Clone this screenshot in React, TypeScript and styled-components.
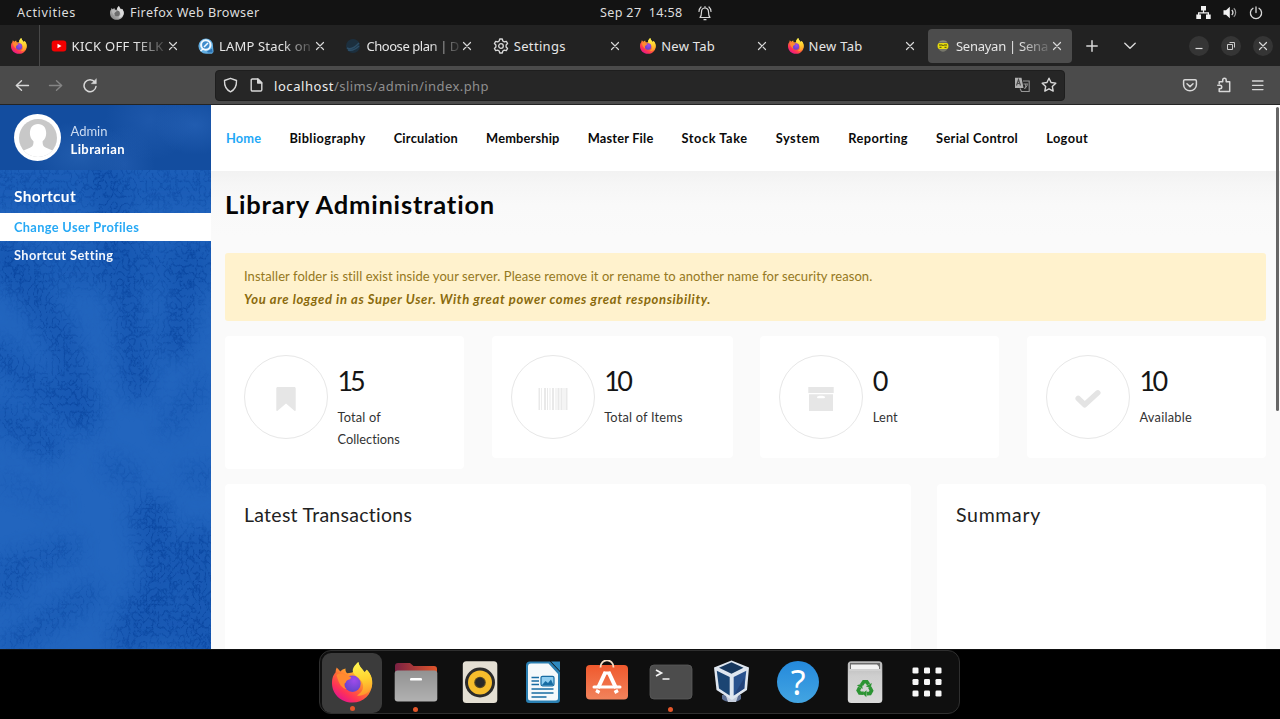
import React, { useLayoutEffect, useRef, useState } from "react";
import styled, { createGlobalStyle, css } from "styled-components";

const systemFont = '"Noto Sans", "Open Sans", sans-serif';
const pageFont = 'Lato, "Open Sans", sans-serif';

const GlobalStyle = createGlobalStyle`
  * { box-sizing: border-box; }
  html, body { margin: 0; padding: 0; background: #000; overflow: hidden; }
  svg { display: block; flex: none; }
`;

/* ---------- text tracked to a given width ---------- */

const TrackedText = styled.span`
  display: inline-block;
  white-space: pre;
`;

function Tracked({ width, children }: { width: number; children: string }) {
  const ref = useRef<HTMLSpanElement>(null);
  const [spacing, setSpacing] = useState(0);
  useLayoutEffect(() => {
    if (ref.current) {
      const natural = ref.current.getBoundingClientRect().width;
      setSpacing((width - natural) / children.length);
    }
  }, [width, children]);
  return (
    <TrackedText ref={ref} style={{ letterSpacing: spacing }}>
      {children}
    </TrackedText>
  );
}

/* ---------- desktop ---------- */

const Desktop = styled.div`
  width: 1280px;
  height: 719px;
  display: flex;
  flex-direction: column;
  background: #000;
  font-family: ${systemFont};
  overflow: hidden;
`;

const TopBar = styled.header`
  height: 25px;
  flex: none;
  background: #131313;
  color: #dedede;
  display: grid;
  grid-template-columns: 600px 1fr auto;
  align-items: center;
  padding-right: 17px;
  font-size: 12.6px;
  line-height: 25px;
`;

const TopLeft = styled.div`
  display: flex;
  align-items: center;
  padding-left: 17px;
`;

const AppMenu = styled.div`
  display: flex;
  align-items: center;
  gap: 6px;
  margin-left: 34px;
`;

const Clock = styled.div`
  display: flex;
  align-items: center;
  gap: 15px;
`;

const Tray = styled.div`
  display: flex;
  align-items: center;
  gap: 11.5px;
`;

/* ---------- browser chrome ---------- */

const TabStrip = styled.div`
  height: 41px;
  flex: none;
  background: #222;
  display: flex;
  align-items: center;
`;

const PinnedTab = styled.div`
  width: 40px;
  height: 41px;
  border-right: 1px solid #484848;
  display: flex;
  align-items: center;
  padding-left: 11px;
  margin-right: 3.6px;
`;

const Tab = styled.div<{ $active?: boolean }>`
  width: 144px;
  height: 34px;
  margin-right: 3.4px;
  flex: none;
  border-radius: 4px;
  background: ${(p) => (p.$active ? "#4c4c4c" : "transparent")};
  display: flex;
  align-items: center;
  padding: 0 10px 0 7px;
`;

const TabTitle = styled.div<{ $fade?: boolean }>`
  width: 93px;
  margin-left: 5px;
  margin-right: 3px;
  overflow: hidden;
  white-space: nowrap;
  color: #e6e6e6;
  font-size: 13px;
  line-height: 20px;
  ${(p) =>
    p.$fade &&
    css`
      mask-image: linear-gradient(90deg, #000 68%, rgba(0, 0, 0, 0.15) 100%);
    `}
`;

const StripTools = styled.div`
  display: flex;
  align-items: center;
  gap: 26px;
  margin-left: 10.5px;
`;

const WindowButtons = styled.div`
  display: flex;
  gap: 12px;
  margin-left: auto;
  margin-right: 7px;
`;

const WindowButton = styled.div`
  width: 20px;
  height: 20px;
  border-radius: 50%;
  background: #353535;
  display: flex;
  align-items: center;
  justify-content: center;
`;

const Toolbar = styled.div`
  height: 39px;
  flex: none;
  background: #4b4b4b;
  border-bottom: 1px solid #242424;
  display: flex;
  align-items: center;
`;

const NavButtons = styled.div`
  width: 215px;
  display: flex;
  gap: 18px;
  padding-left: 14px;
`;

const UrlBar = styled.div`
  width: 850px;
  height: 31px;
  border-radius: 4px;
  background: #262626;
  border: 1px solid #1e1e1e;
  display: flex;
  align-items: center;
  padding: 0 7px 0 7px;
  color: #8f8f8f;
  font-size: 13px;
  line-height: 20px;
  b { font-weight: 400; color: #ececec; }
`;

const UrlText = styled.div`
  margin-left: 11px;
  padding-top: 1px;
  flex: 1;
  display: flex;
`;

const ToolbarRight = styled.div`
  display: flex;
  gap: 18px;
  margin-left: auto;
  margin-right: 14px;
`;

/* ---------- page ---------- */

const Page = styled.main`
  height: 544px;
  flex: none;
  display: flex;
  background: #fafafa;
  font-family: ${pageFont};
  position: relative;
  overflow: hidden;
`;

const Sidebar = styled.aside`
  width: 211px;
  flex: none;
  position: relative;
  background: #1e60ba;
  color: #fff;
`;

const Texture = styled.svg`
  position: absolute;
  inset: 0;
`;

const SidebarContent = styled.div`
  position: relative;
`;

const Profile = styled.div`
  height: 65px;
  display: flex;
  align-items: center;
  padding-left: 14px;
  background:
    radial-gradient(ellipse 40px 30px at 195px 20px, rgba(45, 105, 190, 0.55), transparent),
    radial-gradient(ellipse 45px 40px at 150px 15px, rgba(40, 98, 182, 0.5), transparent),
    radial-gradient(ellipse 50px 34px at 80px 50px, rgba(45, 105, 185, 0.55), transparent),
    radial-gradient(ellipse 30px 40px at 125px 60px, rgba(40, 98, 182, 0.5), transparent),
    #134d9f;
`;

const Avatar = styled.div`
  width: 47px;
  height: 47px;
  border-radius: 50%;
  background: #fff;
  display: flex;
  align-items: center;
  justify-content: center;
  margin-right: 9.5px;
`;

const ProfileText = styled.div`
  display: flex;
  flex-direction: column;
  align-items: flex-start;
  font-size: 13px;
  line-height: 18px;
  padding-top: 4px;
  color: #ccdcf1;
  b { color: #fff; }
`;

const ShortcutTitle = styled.h2`
  margin: 0;
  height: 43px;
  padding: 11px 14px 0;
  font-size: 15.5px;
  line-height: 30px;
  font-weight: 700;
`;

const ShortcutLink = styled.div<{ $active?: boolean }>`
  height: 28px;
  padding-left: 14px;
  line-height: 28px;
  font-size: 12.8px;
  font-weight: 700;
  color: ${(p) => (p.$active ? "#27a9f5" : "#f2f6fc")};
  background: ${(p) => (p.$active ? "#fff" : "transparent")};
`;

const Content = styled.section`
  flex: 1;
  display: flex;
  flex-direction: column;
`;

const MenuBar = styled.nav`
  height: 66px;
  flex: none;
  background: #fff;
  display: flex;
  gap: 28.1px;
  padding-left: 15px;
  font-size: 12.8px;
  line-height: 66px;
  font-weight: 700;
`;

const MenuItem = styled.div<{ $active?: boolean }>`
  color: ${(p) => (p.$active ? "#1fa8f6" : "#0a0a0a")};
  white-space: nowrap;
`;

const TitleBand = styled.div`
  height: 68px;
  flex: none;
  padding-left: 14px;
  background: linear-gradient(#f2f2f2 0, #f6f6f6 14px, #f9f9f9 34px, #fafafa 66px);
  h1 {
    margin: 0;
    font-size: 25.5px;
    line-height: 66px;
    font-weight: 700;
    color: #050505;
  }
`;

const Body = styled.div`
  display: flex;
  flex-direction: column;
  padding: 14px 14px 0;
`;

const Alert = styled.div`
  height: 68px;
  border-radius: 3px;
  background: #fff2cd;
  color: #957821;
  font-size: 13px;
  line-height: 22.5px;
  padding: 12px 19px;
  em { font-weight: 700; color: #8a6a0c; }
`;

const Cards = styled.div`
  display: grid;
  grid-template-columns: 239px 241px 239px 239px;
  justify-content: space-between;
  align-items: start;
  height: 163px;
  padding-top: 15px;
`;

const Card = styled.div<{ $tall?: boolean }>`
  height: ${(p) => (p.$tall ? 133 : 122)}px;
  border-radius: 4px;
  background: #fff;
  display: flex;
  padding: 19px;
`;

const IconRing = styled.div`
  width: 84px;
  height: 84px;
  flex: none;
  border: 1px solid #e7e7e7;
  border-radius: 50%;
  display: flex;
  align-items: center;
  justify-content: center;
  padding-top: 4px;
  margin-right: 9.5px;
`;

const CardText = styled.div`
  color: #333;
  font-size: 12.8px;
  line-height: 22.6px;
  padding-top: 7px;
`;

const CardNumber = styled.div`
  color: #151515;
  font-size: 27px;
  line-height: 38px;
  height: 43.5px;
`;

const Panels = styled.div`
  display: flex;
  justify-content: space-between;
`;

const Panel = styled.div<{ $width: number }>`
  width: ${(p) => p.$width}px;
  height: 170px;
  border-radius: 4px;
  background: #fff;
  padding: 15px 19px;
  color: #222;
  font-size: 19.5px;
  line-height: 32px;
`;

const Scrollbar = styled.div`
  position: absolute;
  right: 1px;
  top: 2px;
  width: 3px;
  height: 304px;
  border-radius: 2px;
  background: #666;
`;

/* ---------- dock ---------- */

const DockArea = styled.footer`
  flex: 1;
  display: flex;
  justify-content: center;
  padding-top: 1px;
  border-top: 1px solid #111;
`;

const Dock = styled.div`
  width: 641px;
  height: 64px;
  margin-left: -1px;
  margin-top: -1px;
  border: 1px solid #2f2f2f;
  border-radius: 12px;
  background: #0f0f0f;
  display: flex;
  padding: 2px 0 0 2px;
`;

const DockItem = styled.div<{ $active?: boolean }>`
  width: 60px;
  height: 60px;
  flex: none;
  margin-right: 3.75px;
  border-radius: 9px;
  background: ${(p) => (p.$active ? "#3b3b3b" : "transparent")};
  display: flex;
  flex-direction: column;
  align-items: center;
  padding-top: 7px;
`;

const RunningDot = styled.i`
  width: 5px;
  height: 5px;
  border-radius: 50%;
  background: #e4562a;
  margin-top: 3px;
`;

const DockDivider = styled.div`
  width: 1px;
  height: 46px;
  margin: 6px 4px 0 -1px;
  background: #3c3c3c;
`;

/* ---------- icons ---------- */

function SharedGradients() {
  return (
    <svg width="0" height="0" style={{ position: "absolute" }}>
      <defs>
        <linearGradient id="ffBody" x1=".85" y1=".1" x2=".25" y2=".95">
          <stop offset="0" stopColor="#fff24a" />
          <stop offset=".3" stopColor="#ffb52c" />
          <stop offset=".55" stopColor="#ff6a35" />
          <stop offset=".8" stopColor="#ff3356" />
          <stop offset="1" stopColor="#e6178a" />
        </linearGradient>
        <linearGradient id="ffFlame" x1=".5" y1="0" x2=".6" y2="1">
          <stop offset="0" stopColor="#fff551" />
          <stop offset=".5" stopColor="#ffd32f" />
          <stop offset="1" stopColor="#ff922c" />
        </linearGradient>
        <radialGradient id="ffGlobe" cx=".6" cy=".3" r=".8">
          <stop offset="0" stopColor="#a04bea" />
          <stop offset="1" stopColor="#5a43c8" />
        </radialGradient>
        <linearGradient id="greyFox" x1="1" y1="0" x2="0" y2="1">
          <stop offset="0" stopColor="#ececec" />
          <stop offset="1" stopColor="#7c7c7c" />
        </linearGradient>
      </defs>
    </svg>
  );
}

function Firefox({ size, grey }: { size: number; grey?: boolean }) {
  return (
    <svg width={size} height={size} viewBox="0 0 41 41">
      <path
        fill={grey ? "url(#greyFox)" : "url(#ffBody)"}
        d="M4.700 5.600C6 7 7.300 8.400 8.300 9.500C9.600 8 11.500 6.900 13.500 6.500C13.300 8.500 13.800 10.300 15.300 11.300C18 10.500 20 11 21 10C21.500 6 23.500 2.500 26.300 0C27 4.500 29.500 7 32 10.500L34.800 7.800C38.500 11.500 40.600 16.500 40.300 21.500C39.800 32.500 31.400 40.600 20.300 40.600C9 40.600 0 32 0 21C0 15 1.700 12.500 3.500 10.400C3.700 8.600 4 7 4.700 5.600Z"
      />
      <path
        fill={grey ? "#dcdcdc" : "url(#ffFlame)"}
        d="M26.300 0C27 4.500 31 7 33.500 11.500L34.800 7.800C39 12 41 18 39.500 24.500C37.500 31 31 34.500 25 33.500C31 30 32.500 25 30 20C28 15.500 20.500 13.500 20.700 8C21.300 5 23.500 2.500 26.300 0Z"
      />
      <circle cx="20.500" cy="21.700" r="8.200" fill={grey ? "#6d6d6d" : "url(#ffGlobe)"} />
      <path
        fill={grey ? "#b8b8b8" : "#ff8a30"}
        d="M4.500 13C8 10.500 12.500 11.500 14.500 14C16 13.800 18.800 14.500 19.200 15.500C18.500 18 14 17.500 14 20.500C11.500 21 12 25 14.500 27C10 26.500 7 22.500 4.500 13Z"
      />
    </svg>
  );
}

const line = { fill: "none", stroke: "#d8d8d8", strokeWidth: 1.3, strokeLinecap: "round", strokeLinejoin: "round" } as const;

const CloseMark = () => (
  <svg width="10" height="10" viewBox="0 0 10 10" {...line} strokeWidth={1.2}>
    <path d="M1.500 1.500l7 7M8.500 1.500l-7 7" />
  </svg>
);

const BellIcon = () => (
  <svg width="14" height="16" viewBox="0 0 14 16" {...line} strokeWidth={1.2}>
    <path d="M2 12.500h10C10.500 11 10.500 9.500 10.500 7C10.500 4.500 9 3 7 3S3.500 4.500 3.500 7C3.500 9.500 3.500 11 2 12.500zM7 1.500v1.200M1 6.500C1 4.500 1.700 3.200 3 2M13 6.500C13 4.500 12.300 3.200 11 2M6 14.700h2" />
  </svg>
);

const NetworkIcon = () => (
  <svg width="15" height="13" viewBox="0 0 15 13" fill="#f0f0f0">
    <path d="M5 0h5v4.500H8.100V6.300H13V8.500h1.700V13H10V8.500h1.700V7.500H3.300v1H5V13H.300V8.500H2V6.300h4.900V4.500H5z" />
  </svg>
);

const VolumeIcon = () => (
  <svg width="15" height="13" viewBox="0 0 15 13">
    <path d="M.500 4.200H3L6.800.700v11.600L3 8.800H.500z" fill="#f2f2f2" />
    <path d="M8.800 4c1.300 1.400 1.300 3.600 0 5" stroke="#ddd" fill="none" strokeWidth="1.300" />
    <path d="M10.800 2.300c2.500 2.400 2.500 6 0 8.400" stroke="#999" fill="none" strokeWidth="1.200" />
  </svg>
);

const PowerIcon = () => (
  <svg width="14" height="14" viewBox="0 0 14 14" {...line} strokeWidth={1.3}>
    <path d="M7 .900V6.500M4 2.300a5.600 5.600 0 1 0 6 0" />
  </svg>
);

const YouTubeIcon = () => (
  <svg width="16" height="16" viewBox="0 0 16 16">
    <rect x=".700" y="2.500" width="14.600" height="11" rx="3" fill="#f40000" />
    <path d="M6.500 5.700v4.600L10.500 8z" fill="#fff" />
  </svg>
);

const LampIcon = () => (
  <svg width="16" height="16" viewBox="0 0 16 16">
    <path d="M8 .500a7 7 0 0 1 7 7c0 2.500.500 4 .500 6.500l-1.500 1.700H8A7.500 7.500 0 1 1 8 .500z" fill="#62aee2" />
    <circle cx="7.800" cy="7" r="4.700" fill="#3f8ccc" stroke="#f2f9ff" strokeWidth="2" />
    <path d="M6 9l4-4M2.500 13l2.500-2" stroke="#f2f9ff" strokeWidth="1.600" />
    <path d="M9 13.500l5-3 .800 4h-5z" fill="#2d74b4" />
  </svg>
);

const PlanIcon = () => (
  <svg width="16" height="16" viewBox="0 0 16 16">
    <circle cx="8" cy="8" r="7" fill="#1c2f3e" />
    <path d="M2 10c4 2 8-.500 12-5M3 12c4 1 8-1 11-4" stroke="#2c4d66" strokeWidth="1.400" fill="none" />
  </svg>
);

const GearIcon = () => (
  <svg width="16" height="16" viewBox="0 0 16 16" {...line} strokeWidth={1.3}>
    <path d="M6.700 1h2.600l.500 2 1.500.900 2-.600 1.300 2.300-1.500 1.400v2l1.500 1.400-1.300 2.300-2-.600-1.500.900-.500 2H6.700l-.500-2-1.500-.900-2 .600-1.300-2.300L2.900 9V7L1.400 5.600l1.300-2.300 2 .600L6.200 3z" />
    <circle cx="8" cy="8" r="2.300" />
  </svg>
);

const SlimsIcon = () => (
  <svg width="16" height="16" viewBox="0 0 16 16">
    <path d="M3.500 4.600C5 1.400 11 1.400 12.500 4.600z" fill="#8a8a78" />
    <path d="M3.500 10.500c1.500 4.200 7.500 4.200 9 0z" fill="#77776b" />
    <rect x="2.600" y="5" width="10.800" height="6" rx="2" fill="#e8dd0e" />
    <path d="M4 7h3.200l.800.800L8.800 7H12M4.500 9.300h2M9.500 9.300h2" stroke="#4a480a" strokeWidth="1" fill="none" />
  </svg>
);

const PlusIcon = () => (
  <svg width="12" height="12" viewBox="0 0 12 12" {...line} strokeWidth={1.5}><path d="M6 .800v10.400M.800 6h10.400" /></svg>
);
const ChevronIcon = () => (
  <svg width="12" height="12" viewBox="0 0 12 12" {...line} strokeWidth={1.4}><path d="M.800 3.200L6 8.300l5.200-5.100" /></svg>
);
const MinimizeIcon = () => (
  <svg width="10" height="10" viewBox="0 0 10 10"><path d="M1.500 7.500h7" stroke="#ddd" strokeWidth="1.200" /></svg>
);
const RestoreIcon = () => (
  <svg width="10" height="10" viewBox="0 0 10 10" fill="none" stroke="#ccc"><path d="M1.500 3.500h5v5h-5zM3.500 1.500h5v5" /></svg>
);
const BackIcon = () => (
  <svg width="16" height="16" viewBox="0 0 16 16" {...line} strokeWidth={1.4}><path d="M14.500 8.500H2.500M7.500 3.800L2.300 8.500 7.500 13.200" /></svg>
);
const ForwardIcon = () => (
  <svg width="16" height="16" viewBox="0 0 16 16" {...line} stroke="#858585" strokeWidth={1.4}><path d="M1.500 8.500H13.500M8.500 3.800L13.700 8.500 8.500 13.200" /></svg>
);
const ReloadIcon = () => (
  <svg width="16" height="16" viewBox="0 0 16 16" {...line} strokeWidth={1.5}>
    <path d="M12.800 5A6 6 0 1 0 14 9.500" />
    <path d="M14.300 2v4.700H9.600z" fill="#d8d8d8" strokeWidth=".5" />
  </svg>
);
const ShieldIcon = () => (
  <svg width="15" height="16" viewBox="0 0 15 16" {...line} strokeWidth={1.4}>
    <path d="M7.500 1.300L13.500 3.500C13.700 8.500 11.700 12.800 7.500 14.800C3.300 12.800 1.300 8.500 1.500 3.500z" />
  </svg>
);
const FileIcon = () => (
  <svg width="13" height="14" viewBox="0 0 13 14" {...line} strokeWidth={1.4}>
    <path d="M1.200 2.200c0-.700.500-1.200 1.200-1.200H8l3.800 3.800v7c0 .700-.500 1.200-1.200 1.200H2.400c-.700 0-1.200-.500-1.200-1.200z" />
    <path d="M7.700 1v4h4z" fill="#d8d8d8" />
  </svg>
);
const TranslateIcon = () => (
  <svg width="16" height="16" viewBox="0 0 16 16" fill="none">
    <path d="M1 .800h6.500l2 10.200H1z" fill="#b0b0b0" />
    <path d="M2.500 8.500l2-6 2 6M3.200 6.500h2.600" stroke="#4a4a4a" strokeWidth="1.100" />
    <path d="M9 4h6.200v10.500H7.500L6 11.500" stroke="#969696" strokeWidth="1.100" />
    <path d="M9.500 7h4.500M11.700 7v4.500M13.300 7.500c0 2-2 3.500-3.300 4" stroke="#969696" />
  </svg>
);
const StarIcon = () => (
  <svg width="16" height="16" viewBox="0 0 16 16" {...line} strokeWidth={1.4}>
    <path d="M8 1.200l2.050 4.350 4.750.600-3.500 3.250.900 4.700L8 11.800 3.800 14.100l.900-4.700L1.200 6.150l4.750-.600z" />
  </svg>
);
const PocketIcon = () => (
  <svg width="16" height="16" viewBox="0 0 16 16" {...line} strokeWidth={1.5}>
    <path d="M2.800 2.800h10.400c.700 0 1.200.500 1.200 1.200v3.800a6.400 6 0 0 1-12.800 0V4c0-.700.500-1.200 1.200-1.200zM5 6.800l3 2.800 3-2.800" />
  </svg>
);
const PuzzleIcon = () => (
  <svg width="16" height="16" viewBox="0 0 16 16" {...line} strokeWidth={1.5}>
    <path d="M3.200 6.500V4.700h3.500V3a1.700 1.700 0 0 1 3.500 0v1.700h3.500v9.800H3.200v-2.700H4a1.700 1.700 0 0 0 0-3.500H1.800" />
  </svg>
);
const MenuIcon = () => (
  <svg width="16" height="16" viewBox="0 0 16 16" {...line}><path d="M2.500 4h10.500M2.500 8.300h10.500M2.500 12.600h10.500" /></svg>
);

const Person = () => (
  <svg width="38" height="38" viewBox="0 0 38 38">
    <clipPath id="portrait"><circle cx="19" cy="19" r="19" /></clipPath>
    <g clipPath="url(#portrait)">
      <rect width="38" height="38" fill="#c8c8c8" />
      <path d="M19 5c5.200 0 8.200 3.600 8.200 9.300 0 3.500-1.500 6.200-3.600 8 0 4 .800 5.200 3.500 6.400l7 3V38H4v-6.300l7-3c2.700-1.200 3.500-2.400 3.500-6.400-2.100-1.800-3.600-4.500-3.600-8C10.900 8.600 13.800 5 19 5z" fill="#fff" />
    </g>
  </svg>
);

const BookmarkIcon = () => (
  <svg width="22" height="26" viewBox="0 0 22 26" fill="#e6e6e6"><path d="M2.700 1h16.600c.800 0 1.400.600 1.400 1.400V24.300c0 .700-.700 1-1.300.500L11 17.500l-8.400 7.300c-.600.500-1.300.200-1.300-.500V2.400C1.300 1.600 1.900 1 2.700 1z" /></svg>
);
const BarcodeIcon = () => (
  <svg width="30" height="24" viewBox="0 0 30 24" fill="#e9e9e9">
    <path d="M.500 1h1.500v22H.500zM3 1h.800v22H3zM6 1h2v22H6zM9 1h1v22H9zM11.500 1h1v22h-1zM14 1h2v22h-2zM17.500 1h1v22h-1zM19.500 1h2v22h-2zM22.500 1h2v22h-2zM25.500 1h1v22h-1zM27.500 1h2v22h-2z" />
  </svg>
);
const ArchiveIcon = () => (
  <svg width="26" height="26" viewBox="0 0 26 26" fill="#e6e6e6">
    <path d="M.300 1h25.400v6H.300zM1 8.200h24V25H1zM9 11.200a1 1 0 0 0 1 1h6a1 1 0 0 0 1-1c0-1-1.500-1.500-4-1.500s-4 .500-4 1.500z" fillRule="evenodd" />
  </svg>
);
const CheckIcon = () => (
  <svg width="26" height="22" viewBox="0 0 26 22" fill="none" stroke="#e4e4e4" strokeWidth="5.500"><path d="M3.200 10.500l6.500 6.300L22.800 4.800" strokeLinejoin="round" strokeLinecap="round" /></svg>
);

/* ---------- dock icons ---------- */

const FilesIcon = () => (
  <svg width="44" height="44" viewBox="0 0 44 44">
    <defs>
      <linearGradient id="folderBack"><stop offset="0" stopColor="#7a2143" /><stop offset="1" stopColor="#e0552b" /></linearGradient>
      <linearGradient id="folderFront" x2="0" y2="1"><stop offset="0" stopColor="#929292" /><stop offset="1" stopColor="#b1b1b1" /></linearGradient>
    </defs>
    <path d="M1 6a3 3 0 0 1 3-3h12l3.500 3H40a3 3 0 0 1 3 3v22H1z" fill="url(#folderBack)" />
    <rect x=".700" y="10.500" width="42.600" height="31" rx="3" fill="url(#folderFront)" />
    <rect x="16" y="18" width="12" height="2.600" rx="1.200" fill="#fff" />
  </svg>
);
const SpeakerIcon = () => (
  <svg width="44" height="44" viewBox="0 0 44 44">
    <rect x="4.800" y="1.300" width="34.500" height="41.600" rx="3.500" fill="#e4dfd3" />
    <circle cx="22" cy="22.500" r="15" fill="#2b2b2b" />
    <circle cx="22" cy="22.500" r="12" fill="#f6bd2c" />
    <circle cx="22" cy="22.500" r="5.800" fill="#5b4a20" />
    <circle cx="22" cy="22.500" r="4.700" fill="#292929" />
  </svg>
);
const WriterIcon = () => (
  <svg width="44" height="44" viewBox="0 0 44 44">
    <path d="M9 1.500h20l10 10.500V40a3 3 0 0 1-3 3H8a3 3 0 0 1-3-3V5.500a4 4 0 0 1 4-4z" fill="#2a7fb2" />
    <path d="M10 3.500h17.500L37 14v24a2.500 2.500 0 0 1-2.500 2.500h-25A2.500 2.500 0 0 1 7 38V6.500a3 3 0 0 1 3-3z" fill="#f5f9fb" />
    <path d="M30 1.500h9V11z" fill="#2e89bf" />
    <path d="M10.500 17.500h7.500M10.500 21h7.500M10.500 24.500h7.500M10.500 29h22M10.500 33h22M10.500 37h15" stroke="#176ca3" strokeWidth="1.700" />
    <rect x="20" y="16.300" width="13" height="9.500" rx="1.500" fill="#8fcdf0" stroke="#176ca3" strokeWidth="1.200" />
    <path d="M21 25l3.500-4 2.500 2 3-3.500 2.500 5.500z" fill="#176ca3" />
  </svg>
);
const SoftwareIcon = () => (
  <svg width="44" height="44" viewBox="0 0 44 44">
    <defs><linearGradient id="bag" x2="0" y2="1"><stop offset="0" stopColor="#f0592d" /><stop offset="1" stopColor="#f1835c" /></linearGradient></defs>
    <rect x="1" y="5" width="42" height="34.500" rx="4" fill="url(#bag)" />
    <path d="M15.500 7.500C15.500-2 28.500-2 28.500 7.500" fill="none" stroke="#f6dfc6" strokeWidth="1.800" />
    <path d="M20.500 12L13 28M23.500 12L31 28M12 33l1.500-3M32 33l-1.500-3" stroke="#fff" strokeWidth="4" />
    <path d="M19 11.500h6l1 3h-8z" fill="#fff" />
    <path d="M9 27h26" stroke="#fff" strokeWidth="3" strokeLinecap="round" />
  </svg>
);
const TerminalIcon = () => (
  <svg width="44" height="44" viewBox="0 0 44 44">
    <rect x="1" y="5" width="42" height="34" rx="4" fill="#4c4c4c" stroke="#5c5c5c" strokeWidth=".8" />
    <path d="M7 10l5.500 3L7 16M13.500 19h7" fill="none" stroke="#f5f5f5" strokeWidth="1.700" />
  </svg>
);
const BoxIcon = () => (
  <svg width="44" height="44" viewBox="0 0 44 44">
    <path d="M9 35h19v4c-3 4-16 4-19 0z" fill="#5d6f93" />
    <path d="M13 36h12l-2 6h-8z" fill="#c6cedd" />
    <path d="M18.500.500L36 7.500 34 30 19 40 3.500 30 1 7.500z" fill="#dfe6ef" />
    <path d="M18.500 2.300l12 5.500-12 6-12.500-6z" fill="#17375d" />
    <path d="M3.800 10.700L16.700 17v18.600L6 28.500z" fill="#1b4573" />
    <path d="M20.700 17L33.300 10.700 31.300 28.500 20.700 35.600z" fill="#2a528e" />
    <path d="M20.700 35.600L31.300 28.500V18z" fill="#23437a" />
  </svg>
);
const HelpSymbol = styled.div`
  width: 42px;
  height: 42px;
  margin: 1px;
  border-radius: 50%;
  background: linear-gradient(#2489dc, #43a5e2);
  color: #fff;
  font: 400 34px/43px ${systemFont};
  text-align: center;
`;
const TrashIcon = () => (
  <svg width="44" height="44" viewBox="0 0 44 44">
    <defs><linearGradient id="bin" x2="0" y2="1"><stop offset="0" stopColor="#b8b8b8" /><stop offset=".35" stopColor="#cecece" /><stop offset="1" stopColor="#dadada" /></linearGradient></defs>
    <rect x="4.800" y="1.300" width="34.500" height="41.600" rx="3.500" fill="url(#bin)" />
    <path d="M7 3h30v7H7z" fill="#6c6c6c" />
    <path d="M8 4.500h26l2 2V10H8z" fill="#f2f2f2" />
    <path d="M6 10h32" stroke="#d0d0d0" strokeWidth="2" />
    <g transform="translate(22 28.500)" fill="none" stroke="#2c9433" strokeWidth="3.600">
      {[0, 120, 240].map((angle) => (
        <g key={angle} transform={`rotate(${angle})`}>
          <path d="M-3.500-3.500L-1.300-6.800H1.800L3.600-4" />
          <path d="M6.800-5.500L5.500-.200.800-2.300z" fill="#2c9433" stroke="none" />
        </g>
      ))}
    </g>
  </svg>
);
const AppsIcon = () => (
  <svg width="44" height="44" viewBox="0 0 44 44" fill="#f7f7f7">
    {[7.5, 19, 30.5].map((y) => [5.5, 17, 28.5].map((x) => <rect key={`${x}-${y}`} x={x} y={y} width="6" height="6" rx="1.300" />))}
  </svg>
);

/* Blue woodland backdrop: soft dark strokes broken up by fine noise. */
function Woodland() {
  return (
    <Texture width="211" height="544" viewBox="0 0 211 544">
      <defs>
        <filter id="twigs" x="0" y="0" width="211" height="544" filterUnits="userSpaceOnUse" colorInterpolationFilters="sRGB">
          <feGaussianBlur in="SourceGraphic" stdDeviation="10" result="soft" />
          <feTurbulence type="turbulence" baseFrequency="0.17 0.13" numOctaves="3" seed="8" result="noise" />
          <feColorMatrix in="noise" type="matrix" values="0 0 0 0 0.02  0 0 0 0 0.25  0 0 0 0 0.6  -3.2 0 0 0 0.95" result="lines" />
          <feComposite in="lines" in2="soft" operator="in" result="fine" />
          <feComponentTransfer in="soft" result="shade"><feFuncA type="linear" slope="0.5" /></feComponentTransfer>
          <feMerge><feMergeNode in="shade" /><feMergeNode in="fine" /></feMerge>
        </filter>
      </defs>
      <rect width="211" height="544" fill="#2265be" />
      <g filter="url(#twigs)" fill="none" stroke="#0a48a5" strokeLinecap="round">
        <path d="M0 80H211M0 160H211" strokeWidth="46" opacity=".55" />
        <path d="M105 60L125 180 138 280M190 150L175 240M5 150L60 230 82 300" strokeWidth="30" opacity=".85" />
        <path d="M0 250L45 290 85 315M0 310L50 340" strokeWidth="28" opacity=".75" />
        <path d="M200 280L170 320M190 370H211M110 360L135 375" strokeWidth="16" opacity=".6" />
        <path d="M0 465L70 445M0 490L20 480M10 540L90 490" strokeWidth="20" opacity=".7" />
        <path d="M150 410L165 470 130 530M200 440L205 540M160 520H200" strokeWidth="38" opacity=".85" />
        <path d="M0 375L60 400" strokeWidth="12" opacity=".35" />
      </g>
    </Texture>
  );
}

/* ---------- data ---------- */

const tabs = [
  { icon: <YouTubeIcon />, title: "KICK OFF TELK", width: 92, fade: true },
  { icon: <LampIcon />, title: "LAMP Stack on", width: 92, fade: true },
  { icon: <PlanIcon />, title: "Choose plan | D", width: 92.5, fade: true },
  { icon: <GearIcon />, title: "Settings", width: 52 },
  { icon: <Firefox size={16} />, title: "New Tab", width: 54 },
  { icon: <Firefox size={16} />, title: "New Tab", width: 54 },
  { icon: <SlimsIcon />, title: "Senayan | Sena", width: 92, fade: true, active: true },
];

const menu: [string, number][] = [
  ["Home", 35.3], ["Bibliography", 76.2], ["Circulation", 64.5], ["Membership", 73.5], ["Master File", 65.8],
  ["Stock Take", 66], ["System", 44.5], ["Reporting", 60], ["Serial Control", 82], ["Logout", 42],
];

const stats = [
  { icon: <BookmarkIcon />, value: "15", valueWidth: 25, lines: [["Total of", 43.5], ["Collections", 62.5]] },
  { icon: <BarcodeIcon />, value: "10", valueWidth: 26, lines: [["Total of Items", 78.5]] },
  { icon: <ArchiveIcon />, value: "0", valueWidth: 16, lines: [["Lent", 25]] },
  { icon: <CheckIcon />, value: "10", valueWidth: 26, lines: [["Available", 52.5]] },
] as { icon: React.ReactNode; value: string; valueWidth: number; lines: [string, number][] }[];

const dockApps = [
  { icon: <FilesIcon />, running: true },
  { icon: <SpeakerIcon /> },
  { icon: <WriterIcon /> },
  { icon: <SoftwareIcon /> },
  { icon: <TerminalIcon />, running: true },
  { icon: <BoxIcon /> },
  { icon: <HelpSymbol>?</HelpSymbol> },
];

export default function App() {
  return (
    <Desktop>
      <GlobalStyle />
      <SharedGradients />
      <TopBar>
        <TopLeft>
          <Tracked width={59}>Activities</Tracked>
          <AppMenu>
            <Firefox size={14} grey />
            <Tracked width={129.5}>Firefox Web Browser</Tracked>
          </AppMenu>
        </TopLeft>
        <Clock>
          <Tracked width={82.5}>Sep 27  14:58</Tracked>
          <BellIcon />
        </Clock>
        <Tray><NetworkIcon /><VolumeIcon /><PowerIcon /></Tray>
      </TopBar>

      <TabStrip>
        <PinnedTab><Firefox size={16} /></PinnedTab>
        {tabs.map((tab, i) => (
          <Tab key={i} $active={tab.active}>
            {tab.icon}
            <TabTitle $fade={tab.fade}><Tracked width={tab.width}>{tab.title}</Tracked></TabTitle>
            <CloseMark />
          </Tab>
        ))}
        <StripTools><PlusIcon /><ChevronIcon /></StripTools>
        <WindowButtons>
          <WindowButton><MinimizeIcon /></WindowButton>
          <WindowButton><RestoreIcon /></WindowButton>
          <WindowButton><CloseMark /></WindowButton>
        </WindowButtons>
      </TabStrip>

      <Toolbar>
        <NavButtons><BackIcon /><ForwardIcon /><ReloadIcon /></NavButtons>
        <UrlBar>
          <ShieldIcon />
          <svg width="12" height="1" />
          <FileIcon />
          <UrlText>
            <b><Tracked width={60}>localhost</Tracked></b>
            <Tracked width={155}>/slims/admin/index.php</Tracked>
          </UrlText>
          <TranslateIcon />
          <svg width="11" height="1" />
          <StarIcon />
        </UrlBar>
        <ToolbarRight><PocketIcon /><PuzzleIcon /><MenuIcon /></ToolbarRight>
      </Toolbar>

      <Page>
        <Sidebar>
          <Woodland />
          <SidebarContent>
            <Profile>
              <Avatar><Person /></Avatar>
              <ProfileText>
                <Tracked width={37}>Admin</Tracked>
                <b><Tracked width={54.5}>Librarian</Tracked></b>
              </ProfileText>
            </Profile>
            <ShortcutTitle><Tracked width={62}>Shortcut</Tracked></ShortcutTitle>
            <ShortcutLink $active><Tracked width={125}>Change User Profiles</Tracked></ShortcutLink>
            <ShortcutLink><Tracked width={99}>Shortcut Setting</Tracked></ShortcutLink>
          </SidebarContent>
        </Sidebar>
        <Content>
          <MenuBar>
            {menu.map(([label, width], i) => (
              <MenuItem key={label} $active={i === 0}><Tracked width={width}>{label}</Tracked></MenuItem>
            ))}
          </MenuBar>
          <TitleBand><h1><Tracked width={270.5}>Library Administration</Tracked></h1></TitleBand>
          <Body>
            <Alert>
              <div><Tracked width={628.5}>Installer folder is still exist inside your server. Please remove it or rename to another name for security reason.</Tracked></div>
              <em><Tracked width={467}>You are logged in as Super User. With great power comes great responsibility.</Tracked></em>
            </Alert>
            <Cards>
              {stats.map((s, i) => (
                <Card key={i} $tall={s.lines.length > 1}>
                  <IconRing>{s.icon}</IconRing>
                  <CardText>
                    <CardNumber><Tracked width={s.valueWidth}>{s.value}</Tracked></CardNumber>
                    {s.lines.map(([text, width]) => (
                      <div key={text}><Tracked width={width}>{text}</Tracked></div>
                    ))}
                  </CardText>
                </Card>
              ))}
            </Cards>
            <Panels>
              <Panel $width={686}><Tracked width={168.5}>Latest Transactions</Tracked></Panel>
              <Panel $width={329}><Tracked width={85}>Summary</Tracked></Panel>
            </Panels>
          </Body>
        </Content>
        <Scrollbar />
      </Page>

      <DockArea>
        <Dock>
          <DockItem $active><svg width="0" height="2" /><Firefox size={41} /><RunningDot /></DockItem>
          {dockApps.map((app, i) => (
            <DockItem key={i}>{app.icon}{app.running && <RunningDot />}</DockItem>
          ))}
          <DockDivider />
          <DockItem><TrashIcon /></DockItem>
          <DockItem><AppsIcon /></DockItem>
        </Dock>
      </DockArea>
    </Desktop>
  );
}
